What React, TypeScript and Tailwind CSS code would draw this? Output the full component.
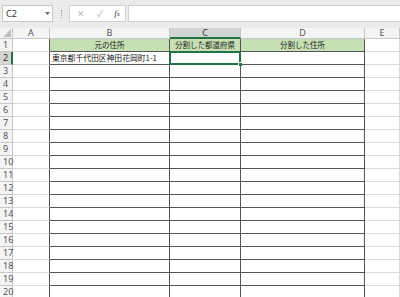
import React from "react";

const COLS = ["A", "B", "C", "D", "E"];
const ROWS = Array.from({ length: 20 }, (_, i) => i + 1);

const headerCell =
  "flex items-center justify-center border-r border-b border-[#c8c8c8] bg-[#f4f4f4] text-[9px] text-[#555] font-['Noto_Sans',sans-serif]";

function Toolbar() {
  return (
    <div className="flex h-[28px] items-start bg-[#ebebeb] pt-[5px] pl-[2px]">
      <div className="flex h-[17px] w-[51px] items-center justify-between border border-[#c6c6c6] bg-white pl-[3px] pr-[2px]">
        <span className="text-[9px] text-[#333] font-['Noto_Sans',sans-serif]">C2</span>
        <svg width="5" height="3" viewBox="0 0 5 3">
          <path d="M0 0h5L2.5 3z" fill="#666" />
        </svg>
      </div>
      <div className="flex h-[17px] w-[16px] items-center justify-center">
        <div className="h-[8px] border-l border-dotted border-[#9a9a9a]" />
      </div>
      <div className="flex h-[17px] w-[57px] items-center border border-[#d0d0d0] bg-white">
        <span className="ml-[7px] text-[9px] text-[#b8b8b8]">✕</span>
        <span className="ml-[12px] text-[9px] text-[#b8b8b8]">✓</span>
        <span className="ml-[11px] text-[9px] italic text-[#333] font-['Liberation_Serif',serif]">
          f<span className="text-[7px]">x</span>
        </span>
      </div>
      <div className="ml-[2px] h-[17px] flex-1 border border-[#d0d0d0] border-r-0 bg-white" />
    </div>
  );
}

function DataCell({ col, row }: { col: number; row: number }) {
  const inTable = col >= 1 && col <= 3;
  const leftOfTable = col === 0;
  let cls = "relative flex items-center border-b border-r ";
  if (inTable) cls += "border-[#555]";
  else if (leftOfTable) cls += "border-b-[#dadada] border-r-[#555]";
  else cls += "border-[#dadada]";

  if (row === 1 && inTable) {
    const labels = ["元の住所", "分割した都道府県", "分割した住所"];
    return (
      <div className={cls + " justify-center bg-[#c6e0b4]"}>
        <span className="text-[7.5px] text-[#222]">{labels[col - 1]}</span>
      </div>
    );
  }
  if (row === 2 && col === 1) {
    return (
      <div className={cls + " pl-[2px]"}>
        <span className="whitespace-nowrap text-[7.8px] text-[#111]">東京都千代田区神田花岡町1-1</span>
      </div>
    );
  }
  if (row === 2 && col === 2) {
    return (
      <div className={cls}>
        <div className="absolute -left-px -top-px bottom-[-1px] right-[-1px] border-2 border-[#217346]" />
        <div className="absolute bottom-[-3px] right-[-3px] h-[5px] w-[5px] border border-white bg-[#217346]" />
      </div>
    );
  }
  return <div className={cls} />;
}

export default function App() {
  return (
    <div className="h-[297px] w-[400px] overflow-hidden bg-white font-['Noto_Sans_CJK_JP',sans-serif]">
      <Toolbar />
      <div className="grid grid-cols-[13px_37px_120px_71px_124px_1fr] grid-rows-[11px] auto-rows-[13px]">
        <div className="flex items-end justify-end border-r border-b border-[#c8c8c8] bg-[#f4f4f4] p-[1px]">
          <svg width="8" height="8" viewBox="0 0 8 8">
            <path d="M8 0v8H0z" fill="#c0c0c0" />
          </svg>
        </div>
        {COLS.map((c) =>
          c === "C" ? (
            <div
              key={c}
              className="flex items-center justify-center border-r border-b-2 border-r-[#c8c8c8] border-b-[#217346] bg-[#d4d4d4] text-[9px] text-[#333] font-['Noto_Sans',sans-serif]">
              {c}
            </div>
          ) : (
            <div key={c} className={headerCell}>
              {c}
            </div>
          )
        )}
        {ROWS.map((r) => (
          <React.Fragment key={r}>
            {r === 2 ? (
              <div className="flex items-center justify-start border-b border-r-2 border-b-[#c8c8c8] border-r-[#217346] bg-[#d4d4d4] pl-[3px] text-[9px] text-[#333] font-['Noto_Sans',sans-serif]">
                {r}
              </div>
            ) : (
              <div className="flex items-center justify-start border-r border-b border-[#c8c8c8] bg-[#f4f4f4] pl-[3px] text-[9px] text-[#555] font-['Noto_Sans',sans-serif]">
                {r}
              </div>
            )}
            {COLS.map((_, ci) => (
              <DataCell key={ci} col={ci} row={r} />
            ))}
          </React.Fragment>
        ))}
      </div>
    </div>
  );
}
